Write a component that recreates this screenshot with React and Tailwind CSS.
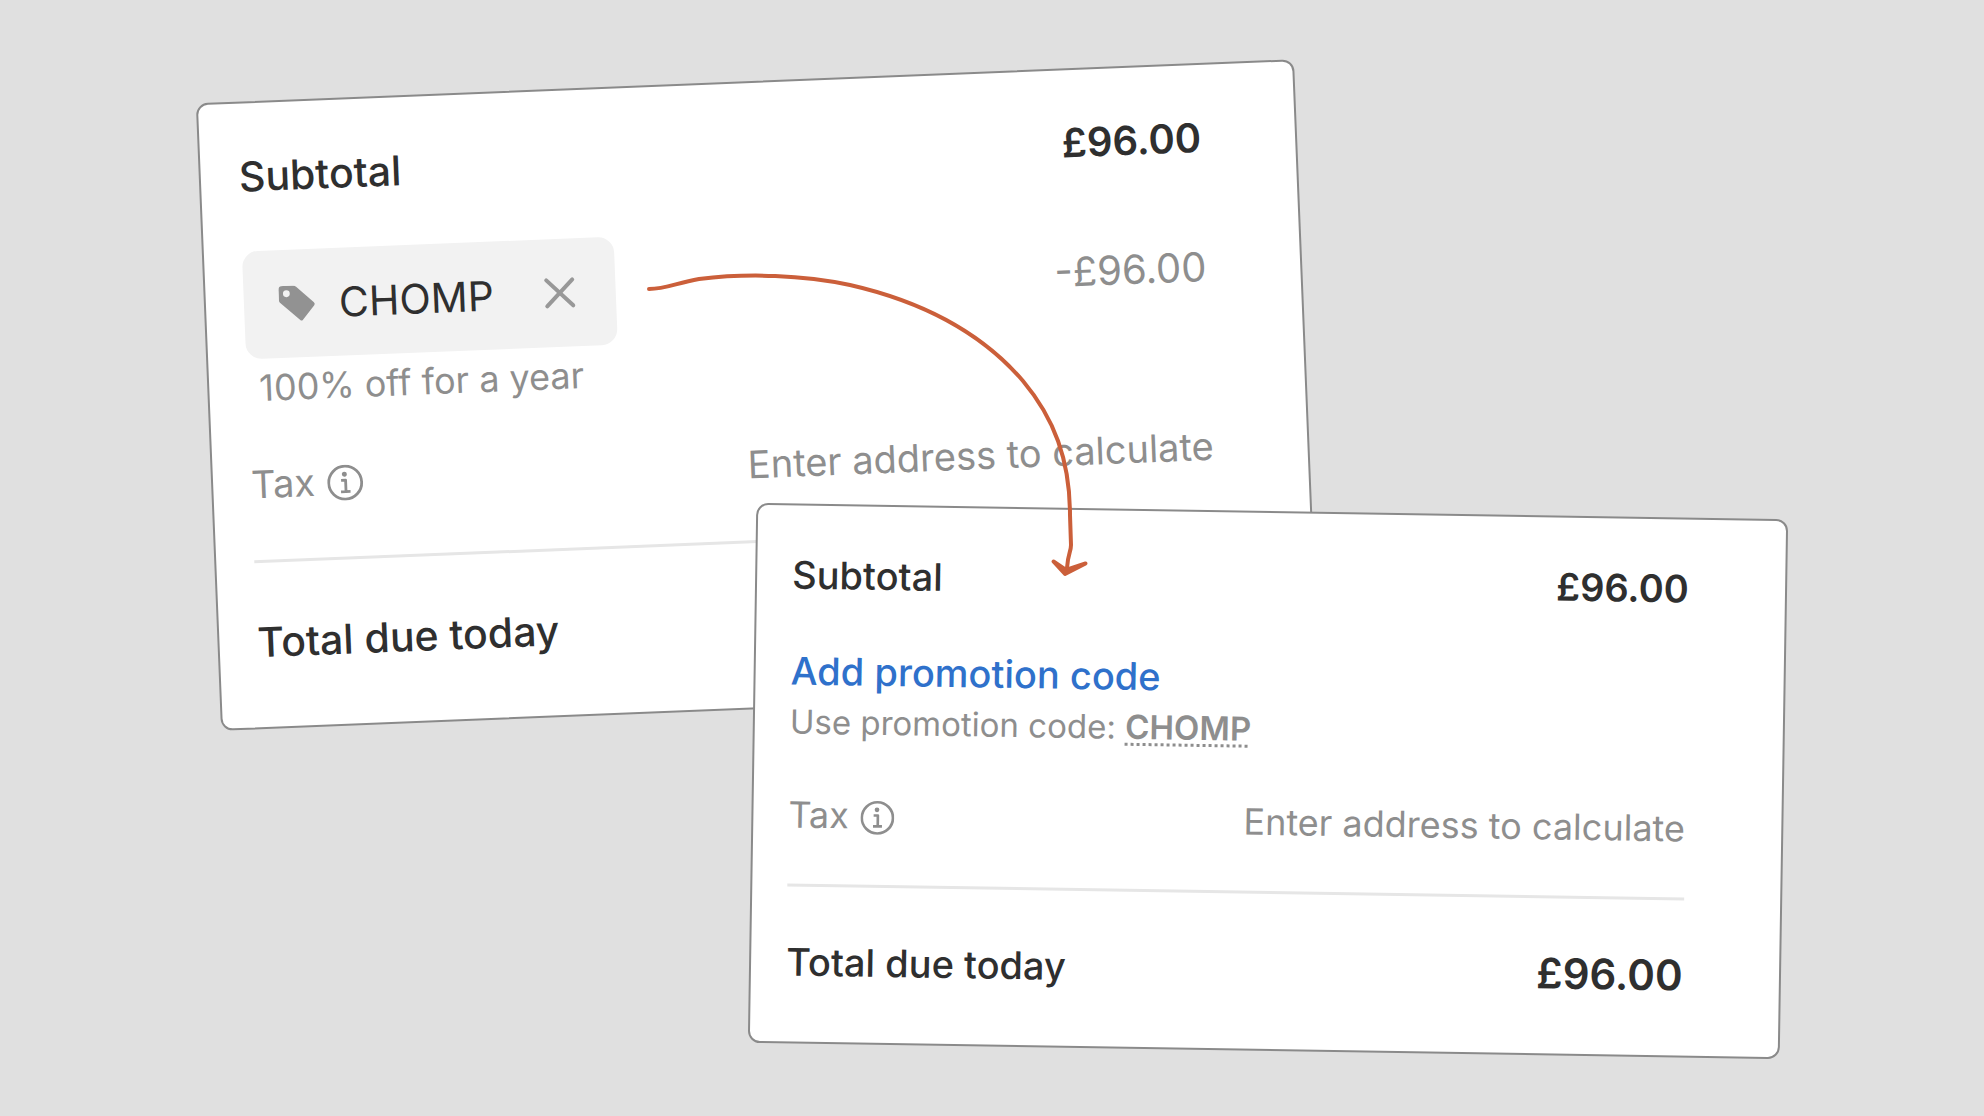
import React from "react";

const TagIcon = () => (
  <svg viewBox="0 0 36 36" className="size-9 shrink-0" aria-hidden="true">
    <path
      fill="#929292"
      fillRule="evenodd"
      d="M0 4a4 4 0 0 1 4-4h9.500q2.500 0 4.300 1.400L35 17.500q1.500 1.500.200 3L23.200 34.700q-1.200 1.200-2.500 0L1.600 17.300Q0 16 0 13.500zM7.800 4.500a3.400 3.400 0 1 0 0 6.800a3.400 3.400 0 1 0 0-6.800z"
    />
  </svg>
);

const CloseIcon = () => (
  <svg viewBox="0 0 32 32" className="size-8" aria-hidden="true">
    <path
      d="M3 3l26 26M29 3L3 29"
      stroke="#989898"
      strokeWidth="4"
      strokeLinecap="round"
    />
  </svg>
);

const InfoIcon = ({ className }) => (
  <svg viewBox="0 0 36 36" fill="none" className={className} aria-hidden="true">
    <circle cx="18" cy="18" r="16.500" stroke="#8e8e8e" strokeWidth="2.800" />
    <circle cx="17.500" cy="9.500" r="2.500" fill="#8e8e8e" />
    <path
      d="M14 15.500h4.500V27M13.500 27h9.500"
      stroke="#8e8e8e"
      strokeWidth="2.800"
      strokeLinejoin="round"
    />
  </svg>
);

const Arrow = () => (
  <svg
    viewBox="0 0 1984 1116"
    preserveAspectRatio="xMidYMin meet"
    className="pointer-events-none absolute inset-0 w-full"
    fill="none"
    stroke="#cb5f3a"
    strokeWidth="4"
    strokeLinecap="round"
    strokeLinejoin="round"
    aria-hidden="true"
  >
    <path d="M649 289C666 289 676 283 699 279C748 273 803 275 850 285C920 301 981 332 1023 381C1054 418 1070 460 1070 515L1071 545C1071 552 1068 553 1067 568" />
    <path
      d="M1053.500 561.500L1065 574L1085.500 563.500L1066 570z"
      fill="#cb5f3a"
    />
  </svg>
);

const Row = ({ children }) => (
  <div className="flex items-center justify-between">{children}</div>
);

const PromoApplied = () => (
  <section className="ml-[10.5%] w-[55.4%] -rotate-[2.3deg] rounded-xl border-2 border-[#8a8a8a] bg-white pt-12 pr-[94px] pb-[60px] pl-[38px] text-[41px] leading-[50px]">
    <Row>
      <span className="font-medium">Subtotal</span>
      <span className="text-[40px] font-semibold">£96.00</span>
    </Row>

    <div className="mt-[50px] text-[#8e8e8e]">
      <Row>
        <div className="flex h-[108px] w-[372px] items-center rounded-2xl bg-[#f2f2f2] pr-10 pl-[35px]">
          <TagIcon />
          <span className="ml-6 flex-1 text-[#2f2f2f]">CHOMP</span>
          <button type="button" aria-label="Remove promotion code">
            <CloseIcon />
          </button>
        </div>
        <span className="text-[40px]">-£96.00</span>
      </Row>
      <p className="mt-[9px] pl-3 text-[36px] leading-10">
        100% off for a year
      </p>
    </div>

    <div className="mt-[51px] text-[38px] text-[#8e8e8e]">
      <Row>
        <span className="flex items-center gap-3">
          Tax
          <InfoIcon className="mt-1 size-9" />
        </span>
        <span>Enter address to calculate</span>
      </Row>
    </div>

    <hr className="mt-[51px] mb-[54px] border-t-[3px] border-[#e6e6e6]" />

    <p className="font-medium">Total due today</p>
  </section>
);

const PromoSuggested = () => (
  <section className="relative -mt-[198px] ml-[37.9%] w-[52%] rotate-[0.9deg] rounded-xl border-2 border-[#8a8a8a] bg-white pt-[45px] pr-24 pb-14 pl-[35px] text-[38px] leading-[48px]">
    <Row>
      <span className="font-medium">Subtotal</span>
      <span className="font-semibold">£96.00</span>
    </Row>

    <button
      type="button"
      className="mt-12 block font-medium text-[#2f71cb]"
    >
      Add promotion code
    </button>
    <p className="mt-[7px] text-[33px] leading-10 text-[#8e8e8e]">
      Use promotion code:{" "}
      <span className="font-semibold underline decoration-dotted decoration-[3px] underline-offset-4">
        CHOMP
      </span>
    </p>

    <div className="mt-[49px] text-[36px] text-[#8e8e8e]">
      <Row>
        <span className="flex items-center gap-3">
          Tax
          <InfoIcon className="mt-1 size-[34px]" />
        </span>
        <span>Enter address to calculate</span>
      </Row>
    </div>

    <hr className="mt-[45px] mb-[51px] border-t-[3px] border-[#e6e6e6]" />

    <Row>
      <span className="font-medium">Total due today</span>
      <span className="text-[42px] font-semibold">£96.00</span>
    </Row>
  </section>
);

const App = () => {
  return (
    <main className="relative min-h-screen overflow-hidden bg-[#e0e0e0] pt-[81px] font-[Inter,sans-serif] text-[#2f2f2f]">
      <PromoApplied />
      <PromoSuggested />
      <Arrow />
    </main>
  );
};

export default App;
